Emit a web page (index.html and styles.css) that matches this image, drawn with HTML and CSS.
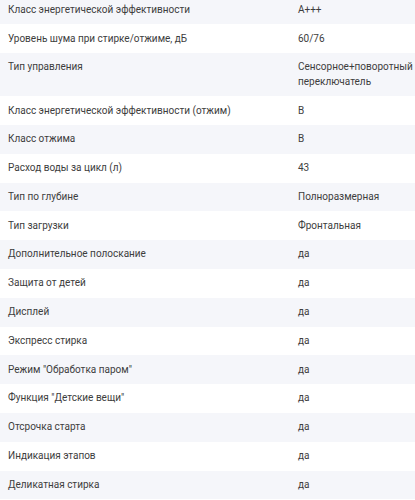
FILE: index.html
```html
<!DOCTYPE html>
<html lang="ru">
<head>
<meta charset="utf-8">
<link rel="stylesheet" href="styles.css">
</head>
<body>
<div class="specs">
  <div class="row"><div class="name">Класс энергетической эффективности</div><div class="val">A+++</div></div>
  <div class="row"><div class="name">Уровень шума при стирке/отжиме, дБ</div><div class="val">60/76</div></div>
  <div class="row"><div class="name">Тип управления</div><div class="val">Сенсорное+поворотный переключатель</div></div>
  <div class="row"><div class="name">Класс энергетической эффективности (отжим)</div><div class="val">B</div></div>
  <div class="row"><div class="name">Класс отжима</div><div class="val">B</div></div>
  <div class="row"><div class="name">Расход воды за цикл (л)</div><div class="val">43</div></div>
  <div class="row"><div class="name">Тип по глубине</div><div class="val">Полноразмерная</div></div>
  <div class="row"><div class="name">Тип загрузки</div><div class="val">Фронтальная</div></div>
  <div class="row"><div class="name">Дополнительное полоскание</div><div class="val">да</div></div>
  <div class="row"><div class="name">Защита от детей</div><div class="val">да</div></div>
  <div class="row"><div class="name">Дисплей</div><div class="val">да</div></div>
  <div class="row"><div class="name">Экспресс стирка</div><div class="val">да</div></div>
  <div class="row"><div class="name">Режим "Обработка паром"</div><div class="val">да</div></div>
  <div class="row"><div class="name">Функция "Детские вещи"</div><div class="val">да</div></div>
  <div class="row"><div class="name">Отсрочка старта</div><div class="val">да</div></div>
  <div class="row"><div class="name">Индикация этапов</div><div class="val">да</div></div>
  <div class="row"><div class="name">Деликатная стирка</div><div class="val">да</div></div>
</div>
</body>
</html>
```
FILE: styles.css
```css
html, body {
  margin: 0;
  padding: 0;
  background: #ffffff;
}
body {
  font-family: Roboto, "Noto Sans", sans-serif;
  font-size: 10px;
  color: #3d3d3d;
  overflow: hidden;
}
.specs {
  margin-top: -4.4px;
}
.row {
  display: grid;
  grid-template-columns: 290px 1fr;
  line-height: 14.4px;
}
.row:nth-child(odd) {
  background: #f5f6fa;
}
.name, .val {
  padding: 7.2px 0 7.2px 8px;
}
.val {
  padding-right: 1px;
}
```
